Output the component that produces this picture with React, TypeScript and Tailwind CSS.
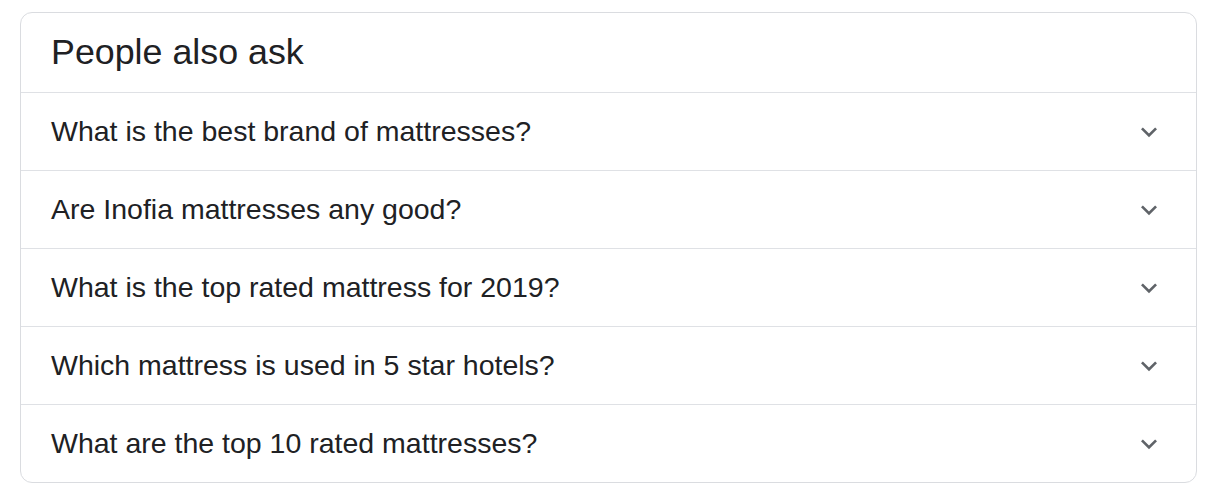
import React from "react";

const questions = [
  "What is the best brand of mattresses?",
  "Are Inofia mattresses any good?",
  "What is the top rated mattress for 2019?",
  "Which mattress is used in 5 star hotels?",
  "What are the top 10 rated mattresses?",
];

function Chevron() {
  return (
    <svg width="32" height="32" viewBox="0 0 24 24" className="shrink-0" aria-hidden="true">
      <path d="M16.59 8.59L12 13.17 7.41 8.59 6 10l6 6 6-6z" fill="#5f6368" />
    </svg>
  );
}

export default function App() {
  return (
    <div
      className="w-[1230px] h-[496px] bg-white pl-[20px] pt-[12px]"
      style={{ fontFamily: '"Liberation Sans", Arial, sans-serif' }}
    >
      <div className="w-[1177px] border border-[#dadce0] rounded-[12px] overflow-hidden">
        <div className="h-[80px] border-b border-[#dfe1e5] flex items-center pl-[30px]">
          <span className="text-[35.8px] leading-normal text-[#202124]">People also ask</span>
        </div>
        {questions.map((q, i) => (
          <div
            key={q}
            className={
              i < questions.length - 1
                ? "h-[78px] border-b border-[#dfe1e5] flex items-center justify-between pl-[30px] pr-[31px]"
                : "h-[77px] flex items-center justify-between pl-[30px] pr-[31px]"
            }
          >
            <span className="text-[28.5px] leading-normal text-[#202124]">{q}</span>
            <Chevron />
          </div>
        ))}
      </div>
    </div>
  );
}
